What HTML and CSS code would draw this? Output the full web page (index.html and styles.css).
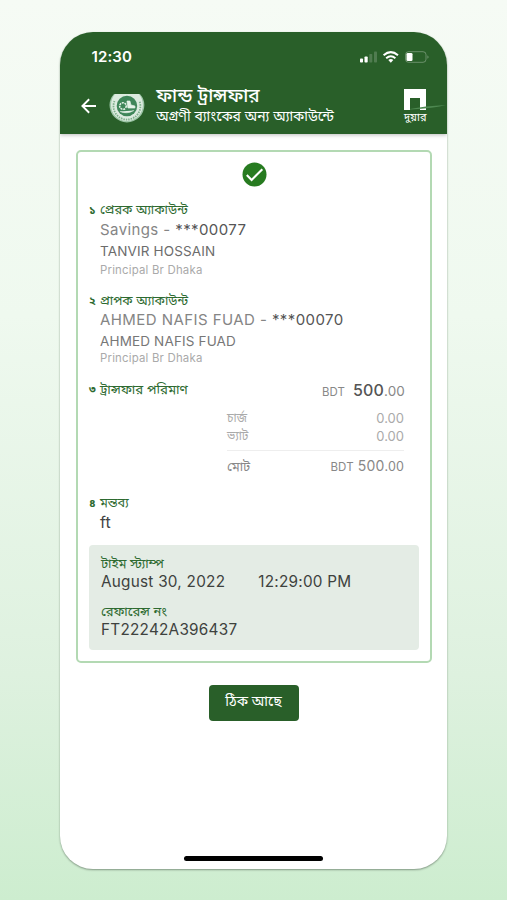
FILE: index.html
```html
<!DOCTYPE html>
<html lang="bn">
<head>
<meta charset="utf-8">
<title>ফান্ড ট্রান্সফার</title>
<link rel="stylesheet" href="styles.css">
</head>
<body>
<main class="phone">
  <header class="top">
    <div class="status">
      <span class="clock">12:30</span>
      <svg class="signals" width="70" height="14" viewBox="0 0 70 14">
        <g fill="#fff"><rect x="0" y="8.5" width="3" height="4" rx=".8"/><rect x="4.5" y="6.5" width="3.2" height="6" rx=".8"/></g>
        <g fill="#fff" opacity=".18"><rect x="9.3" y="4" width="3" height="8.5" rx=".8"/><rect x="14" y="1.5" width="3" height="11" rx=".8"/></g>
        <g fill="none" stroke="#fff" stroke-width="2"><path d="M23.6 5.2q7.2-6.2 14.4 0"/><path d="M26.2 8.2q4.6-3.8 9.2 0"/></g>
        <path d="M28.3 10q2.5-1.8 5 0l-2.5 2.7z" fill="#fff"/>
        <rect x="45.5" y="1.7" width="20.5" height="10.6" rx="3" fill="none" stroke="#fff" opacity=".3"/>
        <rect x="46.5" y="2.9" width="6" height="8.2" rx="1.3" fill="#fff"/>
        <path d="M67.5 5.2q2 1.8 0 3.6z" fill="#fff" opacity=".4"/>
      </svg>
    </div>
    <div class="bar">
      <svg class="back" width="16" height="16" viewBox="0 0 16 16" fill="none" stroke="#fff" stroke-width="1.9"><path d="M16 8H1.5M8.2 1.2L1.4 8l6.8 6.8"/></svg>
      <svg class="logo" width="36" height="30" viewBox="0 0 36 30">
        <path d="M5 1H31Q35.500 6 35.500 12A17.500 17.500 0 0 1 .5 12Q.5 6 5 1Z" fill="#9cc5a6"/>
        <path d="M6 1H30Q34 6 34 12A16 16 0 0 1 2 12Q2 6 6 1Z" fill="#dcebdf"/>
        <path d="M5.500 8A13.500 13.500 0 1 0 30.500 8" fill="none" stroke="#7fb08c" stroke-width="1.800" stroke-dasharray="1.500 1"/>
        <circle cx="18" cy="13" r="10.300" fill="#3f8659"/>
        <circle cx="14" cy="13" r="3.300" fill="none" stroke="#e5f2e8" stroke-width="1.600" stroke-dasharray="2 .8"/>
        <path d="M18 8h3l1 4 4 1v2h-7zM11 18.500q7 3 14-1" fill="#e5f2e8" stroke="#e5f2e8" stroke-width=".7"/>
      </svg>
      <div class="titles">
        <h1>ফান্ড ট্রান্সফার</h1>
        <p>অগ্রণী ব্যাংকের অন্য অ্যাকাউন্টে</p>
      </div>
      <div class="brand">
        <svg width="43" height="22" viewBox="0 0 43 22"><path d="M0 0h22v21h-6V9H6v12H0z" fill="#fff"/><path d="M6 20Q20 17 42 16Q31 19 6 20.500z" fill="#4d8750"/></svg>
        <span>দুয়ার</span>
      </div>
    </div>
  </header>

  <section class="card">
    <svg class="check" width="25" height="25" viewBox="0 0 25 25"><circle cx="12.500" cy="12.500" r="12" fill="#277b20"/><path d="M4.800 13l4.800 5L20.300 7.200" fill="none" stroke="#fff" stroke-width="2.100"/></svg>
    <div class="block sender">
      <h2><b>১</b><span>প্রেরক অ্যাকাউন্ট</span></h2>
      <p class="account">Savings - <em>***00077</em></p>
      <p class="holder">TANVIR HOSSAIN</p>
      <p class="branch">Principal Br Dhaka</p>
    </div>
    <div class="block receiver">
      <h2><b>২</b><span>প্রাপক অ্যাকাউন্ট</span></h2>
      <p class="account">AHMED NAFIS FUAD - <em>***00070</em></p>
      <p class="holder">AHMED NAFIS FUAD</p>
      <p class="branch">Principal Br Dhaka</p>
    </div>
    <div class="block amount">
      <h2><b>৩</b><span>ট্রান্সফার পরিমাণ</span></h2>
      <p class="sum"><small>BDT</small> <strong>500</strong><i>.00</i></p>
    </div>
    <div class="fees">
      <p><span class="name">চার্জ</span><span>0.00</span></p>
      <p><span class="name">ভ্যাট</span><span>0.00</span></p>
      <p class="total"><span>মোট</span><span class="figure"><small>BDT</small> 500<i>.00</i></span></p>
    </div>
    <div class="block note">
      <h2><b>৪</b><span>মন্তব্য</span></h2>
      <p class="remark">ft</p>
    </div>
    <div class="receipt">
      <h3>টাইম স্ট্যাম্প</h3>
      <p class="when"><span>August 30, 2022</span><span>12:29:00 PM</span></p>
      <h3>রেফারেন্স নং</h3>
      <p class="ref">FT22242A396437</p>
    </div>
  </section>
  <button class="ok">ঠিক আছে</button>
  <div class="home"></div>
</main>
</body>
</html>
```
FILE: styles.css
```css
* { box-sizing: border-box; margin: 0; padding: 0; }
body {
  height: 900px; padding: 32px 60px 0; overflow: hidden;
  background: linear-gradient(180deg, #f6fbf5 0, #eff9ef 35%, #def1df 75%, #cdedcf 100%);
  font-family: Inter, "Noto Sans Bengali", "Noto Sans", sans-serif;
}
h1, h2, h3 { font-weight: 400; }
em, i { font-style: normal; }
.phone {
  display: flex; flex-direction: column; align-items: center;
  width: 387px; height: 837px; overflow: hidden;
  background: #fff; border-radius: 33px; box-shadow: 0 1px 2px #819783;
}
.top { width: 100%; height: 102px; flex: none; background: #295f29; color: #fff; box-shadow: 0 1px 4px #0004; }
.status { display: flex; justify-content: space-between; align-items: center; height: 49px; padding: 0 17px 0 31.5px; }
.clock { font-size: 15px; font-weight: 600; letter-spacing: .1px; }
.bar { display: flex; height: 53px; padding-left: 20.5px; }
.back { margin-top: 17px; }
.logo { margin: 12px 0 0 13px; }
.titles { width: 240px; margin: 4px 0 0 11px; white-space: nowrap; }
.titles h1 { height: 21px; line-height: 21px; font-size: 19px; font-weight: 500; }
.titles p { height: 20px; line-height: 20px; font-size: 13.9px; }
.brand { display: flex; flex-direction: column; margin: 8px 0 0 8.5px; width: 43px; }
.brand span { height: 12px; line-height: 12px; font-size: 11px; }
.card { width: 356px; height: 513px; margin: 16px 0 0 1px; padding: 10px 11px 0; border: 2px solid #b3d9b3; border-radius: 5px; }
.check { display: block; margin: 0 auto; }
.block h2 { display: flex; height: 20px; line-height: 20px; font-size: 12.8px; color: #2d6a30; white-space: nowrap; }
.block b { width: 11px; font-size: 11px; flex: none; }
.block p { margin-left: 11px; white-space: nowrap; }
.sender { margin-top: 13px; }
.account { height: 20px; line-height: 20px; font-size: 15px; color: #858585; letter-spacing: .4px; }
.account em { color: #555; }
.holder { height: 22px; line-height: 22px; font-size: 13.5px; color: #6c6c6c; letter-spacing: .15px; }
.branch { height: 16px; line-height: 16px; font-size: 11.4px; color: #aaa; letter-spacing: .2px; }
.receiver { margin-top: 13px; }
.receiver .account { margin-top: -1px; letter-spacing: .43px; }
.receiver .holder { color: #777; }
.receiver .branch { height: 12px; line-height: 12px; }
.amount { display: flex; justify-content: space-between; margin-top: 15px; padding-right: 14px; }
.amount h2 { font-size: 13.3px; }
.sum { height: 22px; line-height: 22px; font-size: 13.5px; color: #888; letter-spacing: .15px; }
.sum small { font-size: 11.4px; margin-right: 4px; }
.sum strong { font-size: 16px; font-weight: 500; color: #555; }
.fees { width: 177px; margin: 8px 15px 0 138px; font-size: 13px; color: #aaa; }
.fees p { display: flex; justify-content: space-between; height: 18px; line-height: 18px; }
.fees .name { font-size: 12px; }
.fees .total { height: 30px; margin-top: 5px; border-top: 1px solid #eee; line-height: 30px; color: #888; }
.total .figure { font-size: 14px; letter-spacing: .15px; }
.figure small { font-size: 11.5px; }
.figure i { font-size: 12.5px; }
.note { margin-top: 13px; }
.remark { height: 20px; line-height: 19px; font-size: 16px; color: #444; }
.receipt { height: 105px; margin-top: 12px; padding: 9px 12px; background: #e4ece5; border-radius: 4px; white-space: nowrap; }
.receipt h3 { height: 18px; line-height: 18px; font-size: 13px; color: #2d6a30; }
.receipt p { height: 20px; line-height: 20px; font-size: 15.3px; color: #3e423e; letter-spacing: .25px; }
.when { display: flex; gap: 33px; margin-bottom: 10px; }
.ok { width: 90px; height: 36px; margin-top: 22px; padding-bottom: 2px; border: 0; border-radius: 4px; background: #295f29; color: #fff; font: 400 14px Inter, "Noto Sans Bengali", "Noto Sans", sans-serif; }
.home { width: 139px; height: 5px; margin-top: 135px; border-radius: 3px; background: #000; }
```
